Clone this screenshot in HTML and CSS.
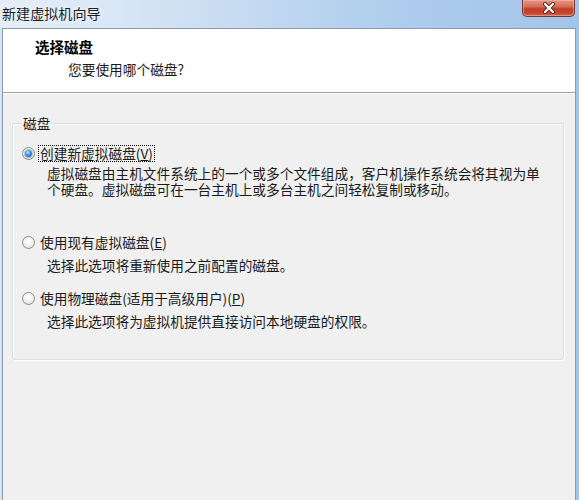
FILE: index.html
```html
<!DOCTYPE html>
<html lang="zh-CN">
<head>
<meta charset="utf-8">
<title>新建虚拟机向导</title>
<link rel="stylesheet" href="styles.css">
</head>
<body>
<div class="window">
  <div class="titlebar">
    <span class="title-text">新建虚拟机向导</span>
    <button class="close-btn" aria-label="关闭">
      <svg width="14" height="12" viewBox="0 0 14 12">
        <path d="M3 2 L11 10 M11 2 L3 10" stroke="#5a2a20" stroke-width="4" stroke-linecap="round"/>
        <path d="M3 2 L11 10 M11 2 L3 10" stroke="#ffffff" stroke-width="2.2" stroke-linecap="round"/>
      </svg>
    </button>
  </div>
  <div class="frame">
    <div class="client">
      <div class="header">
        <div class="header-title">选择磁盘</div>
        <div class="header-sub">您要使用哪个磁盘?</div>
      </div>
      <div class="body">
        <fieldset class="group">
          <legend class="group-label">磁盘</legend>
          <div class="option option-first">
            <div class="option-row">
              <span class="radio checked"></span>
              <span class="option-label focused">创建新虚拟磁盘(<u>V</u>)</span>
            </div>
            <div class="option-desc desc-wrap">虚拟磁盘由主机文件系统上的一个或多个文件组成，客户机操作系统会将其视为单个硬盘。虚拟磁盘可在一台主机上或多台主机之间轻松复制或移动。</div>
          </div>
          <div class="option">
            <div class="option-row">
              <span class="radio"></span>
              <span class="option-label">使用现有虚拟磁盘(<u>E</u>)</span>
            </div>
            <div class="option-desc">选择此选项将重新使用之前配置的磁盘。</div>
          </div>
          <div class="option">
            <div class="option-row">
              <span class="radio"></span>
              <span class="option-label">使用物理磁盘(适用于高级用户)(<u>P</u>)</span>
            </div>
            <div class="option-desc">选择此选项将为虚拟机提供直接访问本地硬盘的权限。</div>
          </div>
        </fieldset>
      </div>
    </div>
  </div>
</div>
</body>
</html>
```
FILE: styles.css
```css
html, body {
  margin: 0;
  padding: 0;
}
body {
  width: 579px;
  height: 500px;
  overflow: hidden;
  font-family: "Noto Sans CJK SC", "Noto Sans", sans-serif;
  font-size: 13.7px;
  line-height: 16px;
  color: #1a1a1a;
  background: #f0f0f0;
}
.window {
  width: 579px;
  height: 500px;
  display: flex;
  flex-direction: column;
  background: linear-gradient(90deg, #d6e4f3 0%, #c9dcf1 30%, #b3cfee 60%, #a2c5ea 100%);
}
.titlebar {
  height: 28px;
  display: flex;
  align-items: flex-start;
  justify-content: space-between;
  background: linear-gradient(90deg, rgba(235,242,250,0.7) 0%, rgba(215,230,245,0.35) 35%, rgba(170,203,236,0.25) 70%, rgba(160,195,233,0.15) 100%);
}
.title-text {
  margin-left: 2px;
  margin-top: 4px;
  font-size: 14.1px;
  line-height: 18px;
  color: #1e1e1e;
  text-shadow: 0 0 6px rgba(255,255,255,0.9);
}
.close-btn {
  margin-right: 4px;
  width: 53px;
  height: 17px;
  padding: 0;
  border: 1px solid #6e3a32;
  border-top: none;
  border-radius: 0 0 5px 5px;
  background: linear-gradient(180deg, #e39584 0%, #d5705a 40%, #c13f27 55%, #c4452b 80%, #d4664a 100%);
  box-shadow: inset 0 0 0 1px rgba(255,200,190,0.45);
  display: flex;
  align-items: center;
  justify-content: center;
}
.close-btn svg {
  display: block;
}
.frame {
  flex: 1;
  display: flex;
  padding: 0 3px 0 2px;
  min-height: 0;
}
.client {
  flex: 1;
  display: flex;
  flex-direction: column;
  border: 1px solid #8c9aab;
  border-bottom: none;
  background: #f0f0f0;
}
.header {
  height: 64px;
  box-sizing: border-box;
  padding: 10px 0 0 32px;
  background: #ffffff;
  border-bottom: 1px solid #a0a0a0;
  box-shadow: 0 1px 0 #ffffff;
}
.header-title {
  font-weight: bold;
  font-size: 14.5px;
  color: #000;
}
.header-sub {
  margin-top: 6px;
  margin-left: 33px;
}
.body {
  padding: 22px 11px 0 9px;
}
.group {
  margin: 0;
  padding: 14px 0 30px 9px;
  border: 1px solid #d5dfe5;
  border-radius: 3px;
  box-shadow: 1px 1px 0 #ffffff, inset 1px 1px 0 #ffffff;
  min-width: 0;
}
.group-label {
  margin-left: 0px;
  padding: 0 1px;
  line-height: 16px;
}
.option {
  display: flex;
  flex-direction: column;
}
.option + .option {
  margin-top: 17px;
}
.option-first {
  margin-bottom: 37px;
}
.option-row {
  display: flex;
  align-items: center;
  height: 16px;
}
.radio {
  width: 13px;
  height: 13px;
  box-sizing: border-box;
  border-radius: 50%;
  border: 1px solid #8a8a8a;
  background: radial-gradient(circle at 50% 35%, #ffffff 0%, #f2f2f2 50%, #d8d8d8 100%);
  display: flex;
  align-items: center;
  justify-content: center;
  flex: none;
}
.radio.checked::after {
  content: "";
  width: 7px;
  height: 7px;
  border-radius: 50%;
  background: radial-gradient(circle at 40% 35%, #bfe3ff 0%, #3f8fe0 45%, #144f9e 100%);
  box-shadow: 0 0 0 1px rgba(40,90,160,0.35);
}
.option-label {
  margin-left: 4px;
  padding: 0 1px;
  line-height: 15px;
}
.option-label.focused {
  outline: 1px dotted #000;
  outline-offset: 0;
}
.option-label u {
  text-underline-offset: 1px;
}
.option-desc {
  margin-top: 4px;
  margin-left: 25px;
  margin-right: 10px;
}
.option + .option .option-desc {
  margin-top: 7px;
}
.desc-wrap {
  max-width: 499px;
}
```
